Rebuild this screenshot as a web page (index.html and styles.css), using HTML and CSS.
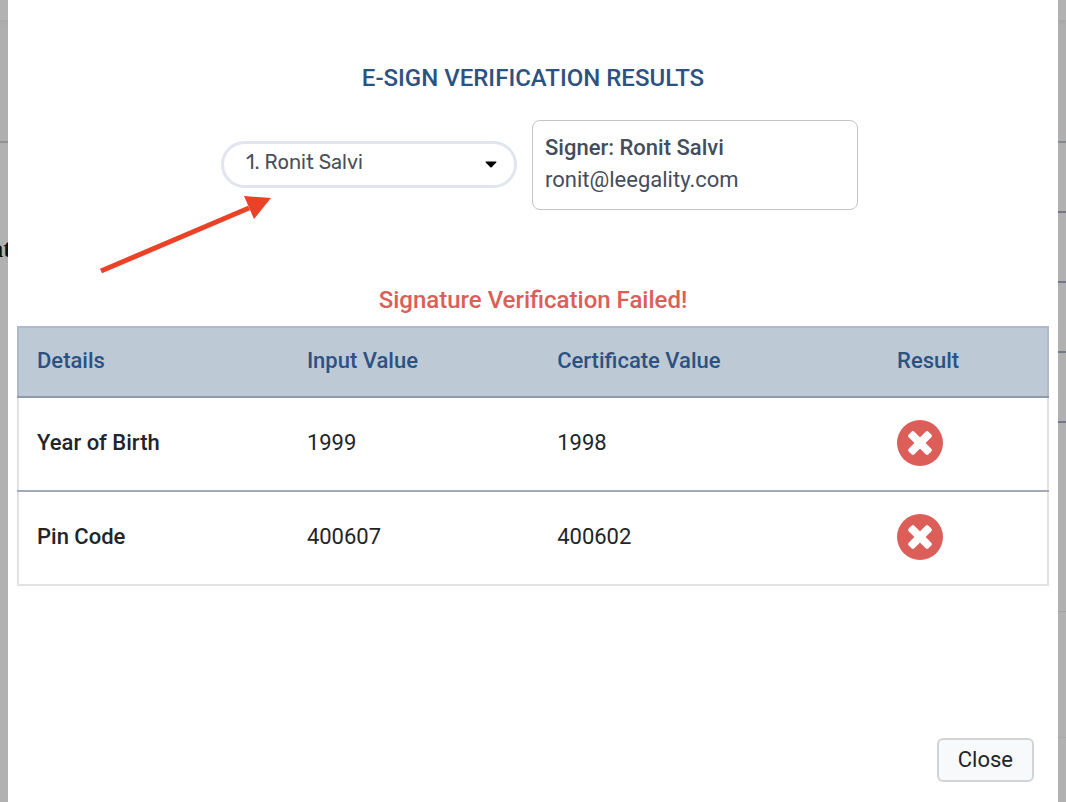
FILE: index.html
```html
<!DOCTYPE html>
<html lang="en">
<head>
  <meta charset="UTF-8">
  <meta name="viewport" content="width=device-width, initial-scale=1">
  <title>E-Sign Verification Results</title>
  <link rel="stylesheet" href="styles.css">
</head>
<body>
  <div class="page">
    <div class="side side-left" aria-hidden="true">
      <div class="side-top"></div>
      <div class="side-head"></div>
      <div class="side-text"><span>at</span></div>
    </div>

    <main class="modal">
      <h1 class="title">E-SIGN VERIFICATION RESULTS</h1>

      <div class="picker">
        <div class="signer-select">
          <select id="signer" aria-label="Signer">
            <option>1. Ronit Salvi</option>
          </select>
          <svg class="caret" width="12" height="7" viewBox="0 0 12 7"><path d="M1 .5h10q.8.2.2 1L6.7 6.3q-.7.5-1.4 0L.8 1.5Q.2.7 1 .5z" fill="#000"/></svg>
          <svg class="arrow" width="174" height="80" viewBox="0 0 174 80">
            <path d="M4 75L152 12" stroke="#eb4127" stroke-width="5" fill="none"/>
            <path d="M147 0l27 2-17 21z" fill="#eb4127"/>
          </svg>
        </div>
        <div class="signer-card">
          <strong>Signer: Ronit Salvi</strong>
          <span>ronit@leegality.com</span>
        </div>
      </div>

      <p class="status">Signature Verification Failed!</p>

      <table class="results">
        <thead>
          <tr><th class="col-details">Details</th><th class="col-input">Input Value</th><th class="col-cert">Certificate Value</th><th>Result</th></tr>
        </thead>
        <tbody>
          <tr>
            <th scope="row">Year of Birth</th>
            <td>1999</td>
            <td>1998</td>
            <td>
              <svg class="fail" role="img" aria-label="Failed" viewBox="0 0 46 46"><circle cx="23" cy="23" r="23" fill="#db5e59"/><g fill="#fff" transform="rotate(45 23 23)"><rect x="9" y="19" width="28" height="8" rx="2"/><rect x="19" y="9" width="8" height="28" rx="2"/></g></svg>
            </td>
          </tr>
          <tr>
            <th scope="row">Pin Code</th>
            <td>400607</td>
            <td>400602</td>
            <td>
              <svg class="fail" role="img" aria-label="Failed" viewBox="0 0 46 46"><circle cx="23" cy="23" r="23" fill="#db5e59"/><g fill="#fff" transform="rotate(45 23 23)"><rect x="9" y="19" width="28" height="8" rx="2"/><rect x="19" y="9" width="8" height="28" rx="2"/></g></svg>
            </td>
          </tr>
        </tbody>
      </table>

      <div class="footer">
        <button class="btn" type="button">Close</button>
      </div>
    </main>

    <div class="side side-right" aria-hidden="true">
      <div class="side-top"></div>
      <div class="side-head"></div>
      <div class="side-row"></div>
      <div class="side-row"></div>
      <div class="side-row"></div>
      <div class="side-row"></div>
      <div class="side-body"></div>
      <div class="side-foot"></div>
    </div>
  </div>
</body>
</html>
```

FILE: styles.css
```css
* {
  box-sizing: border-box;
}
body {
  margin: 0;
  font-family: Roboto, "Liberation Sans", sans-serif;
  font-size: 22px;
  color: #212529;
  background: #b1b1b1;
}
.page {
  display: grid;
  grid-template-columns: 8px 1fr 8px;
  min-height: 100vh;
}

/* dimmed page behind the dialog */
.side {
  overflow: hidden;
}
.side-top {
  height: 20px;
  background: #b2b2b2;
}
.side-head {
  height: 123px;
  background: linear-gradient(#a8a8a8, #afafaf 6px);
  border-bottom: 2px solid #929292;
}
.side-text {
  display: flex;
  justify-content: flex-end;
  padding-top: 92px;
  margin-right: -4px;
  font: bold 26px/28px "Liberation Serif", serif;
  color: #111;
}
.side-right .side-head {
  border-color: #85888e;
}
.side-row {
  height: 70px;
  border-bottom: 2px solid #71788a;
}
.side-body {
  height: 189px;
  border-bottom: 1px solid #a2a2a2;
}
.side-foot {
  height: 126px;
  border-bottom: 1px solid #a8a8a8;
}

.modal {
  display: flex;
  flex-direction: column;
  padding: 60px 9px 20px;
  background: #fff;
}
.title {
  margin: 0;
  font-size: 24px;
  line-height: 36px;
  font-weight: 500;
  text-align: center;
  color: #2c5282;
}
.picker {
  display: flex;
  justify-content: center;
  align-items: center;
  gap: 15px;
  margin-top: 24px;
  padding-left: 13px;
}
.signer-select {
  position: relative;
  flex: 0 1 296px;
  padding-bottom: 2px;
}
.signer-select select {
  display: block;
  width: 100%;
  height: 47px;
  padding: 0 48px 4px 22px;
  font: 20px Rubik, Roboto, sans-serif;
  color: #495057;
  background: #fff;
  border: 3px solid #e2e4f0;
  border-radius: 24px;
  appearance: none;
}
.caret {
  position: absolute;
  right: 20px;
  top: 20px;
  pointer-events: none;
}
.arrow {
  position: absolute;
  left: -124px;
  top: 55px;
  pointer-events: none;
}
.signer-card {
  display: flex;
  flex: 0 1 326px;
  flex-direction: column;
  padding: 11px 12px 13px;
  line-height: 32px;
  color: #434d5b;
  border: 1px solid #c4c4c4;
  border-radius: 8px;
}
.signer-card strong {
  font-weight: 500;
}
.status {
  margin: 72px 0 8px;
  font-size: 24px;
  line-height: 36px;
  font-weight: 500;
  text-align: center;
  color: #db5e59;
}

.results {
  width: 100%;
  border-collapse: collapse;
  border: 2px solid #e2e2e2;
}
.results th,
.results td {
  height: 94px;
  padding: 0 18px 3px;
  text-align: left;
  vertical-align: middle;
}
.results th {
  font-weight: 500;
}
.results thead th {
  height: 70px;
  padding-bottom: 4px;
  color: #2c5282;
  background: #bec9d6;
}
.results thead tr {
  border: 2px solid #b0b9ca;
  border-bottom-color: #8c98b4;
}
.results tbody tr + tr {
  border-top: 2px solid #a0aabf;
}
.col-details {
  width: 26.3%;
}
.col-input {
  width: 24.3%;
}
.col-cert {
  width: 33%;
}
.fail {
  display: block;
  width: 46px;
  height: 46px;
}

.footer {
  display: flex;
  justify-content: flex-end;
  margin-top: auto;
  padding-right: 15px;
}
.btn {
  height: 44px;
  padding: 0 19px 2px;
  font: 22px Roboto, sans-serif;
  color: #212529;
  background: #f8f9fa;
  border: 2px solid #d3d3d3;
  border-radius: 6px;
  cursor: pointer;
}
.btn:hover {
  background: #e9ecef;
}
```
